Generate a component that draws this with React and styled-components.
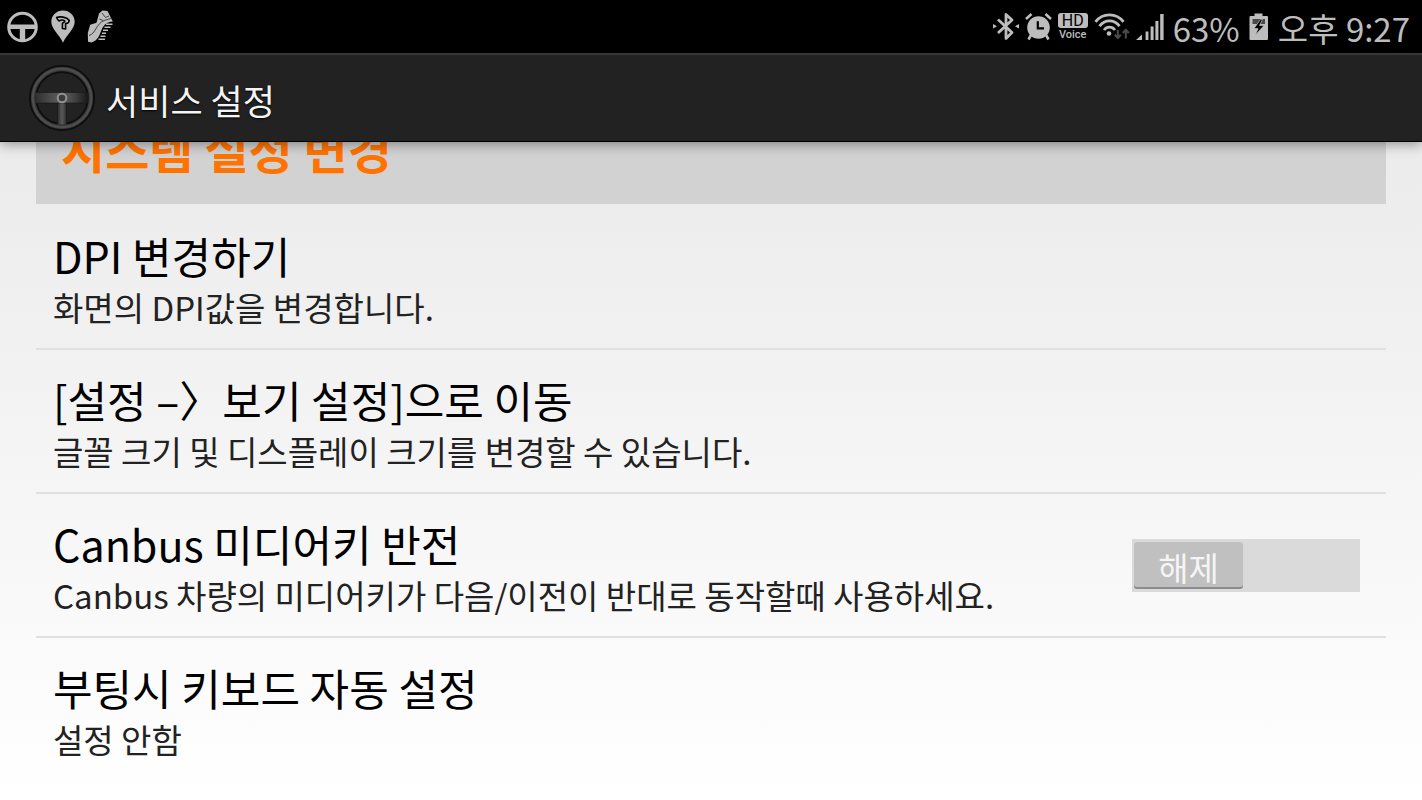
import React, { useState } from "react";
import styled, { createGlobalStyle } from "styled-components";

const settings = [
    {
        id: "dpi",
        title: "DPI 변경하기",
        summary: "화면의 DPI값을 변경합니다.",
    },
    {
        id: "display",
        title: "[설정 –〉보기 설정]으로 이동",
        summary: "글꼴 크기 및 디스플레이 크기를 변경할 수 있습니다.",
    },
    {
        id: "canbus",
        title: "Canbus 미디어키 반전",
        summary: "Canbus 차량의 미디어키가 다음/이전이 반대로 동작할때 사용하세요.",
        toggle: true,
    },
    {
        id: "keyboard",
        title: "부팅시 키보드 자동 설정",
        summary: "설정 안함",
    },
];

const WheelIcon = () => (
    <svg width="32" height="32" viewBox="0 0 32 32">
        <circle cx="15.5" cy="16" r="13.8" fill="none" stroke="#bdbdbd" strokeWidth="3" />
        <path d="M3 13.5H28V18H18.2V29H12.8V18H3Z" fill="#bdbdbd" />
    </svg>
);

const PinIcon = () => (
    <svg width="24" height="33" viewBox="0 0 24 33">
        <path d="M12 0.5C5.4 0.5 0.3 5.4 0.3 11.8C0.3 19 8 24 12 32.8C16 24 23.7 19 23.7 11.8C23.7 5.4 18.6 0.5 12 0.5Z" fill="#bdbdbd" />
        <path d="M5.6 7.4C9 6.2 15.5 7 18.2 10.2C18 13 16.6 13.6 14.6 13.5V19L11.4 18.5V13.5C11.4 12.2 14 12.6 13.8 11.2C12.2 9.7 9.7 9.9 8.3 11C7 10.2 6 9 5.6 7.4Z" fill="#bdbdbd" stroke="#000" strokeWidth="1.6" strokeLinejoin="round" />
    </svg>
);

const ShoeIcon = () => (
    <svg width="27" height="33" viewBox="0 0 27 33">
        <path d="M15.5 0.5L20.5 1L25.8 11.5C20 12 16.5 15 14.5 20C12.5 25 11 30.5 4.5 32.5L1 31.8L0.8 23L3.2 14.8L9.5 12.7L12 3.5Z" fill="#bdbdbd" />
        <path d="M2 25.5C8.5 24 9 14 17 10.5L24 8.5M15 3L18.5 7.5L22 6M12.5 9L16 10.5" fill="none" stroke="#333" strokeWidth="0.9" />
        <path d="M19 14.2H25.5M17.5 17.2H23.5M16 20.2H21M15 23.2H19M13.5 26.2H18.5M11.5 29.2H18" stroke="#bdbdbd" strokeWidth="1.5" />
    </svg>
);

const BluetoothIcon = () => (
    <svg width="26" height="29" viewBox="0 0 26 29">
        <path d="M5 7.5L19 20.5L13 26.5V2.5L19 8L5 21" fill="none" stroke="#bdbdbd" strokeWidth="2.8" strokeLinejoin="round" />
        <path d="M0 12L4 14.3L0 16.6ZM26 12L22 14.3L26 16.6Z" fill="#bdbdbd" />
    </svg>
);

const AlarmIcon = () => (
    <svg width="27" height="28" viewBox="0 0 27 28">
        <circle cx="13.5" cy="14.5" r="11.3" fill="#bdbdbd" />
        <path d="M1 6L6.5 1M26 6L20.5 1M6 22L3.5 26.5M21 22L23.5 26.5" stroke="#bdbdbd" strokeWidth="2.6" />
        <path d="M12.8 8.3V15.3H19" fill="none" stroke="#000" strokeWidth="2.2" />
    </svg>
);

const WifiIcon = () => (
    <svg width="36" height="28" viewBox="0 0 36 28">
        <path d="M1.5 8.8C8.5-0.5 22.5-0.5 29.5 8.8M5.5 13.2C10.7 6.2 20.3 6.2 25.5 13.2M10 17C13 13.2 18 13.2 21 17" fill="none" stroke="#bdbdbd" strokeWidth="2.8" />
        <circle cx="15" cy="20.5" r="2.3" fill="#bdbdbd" />
        <path d="M23.8 17V25M20.8 21.8L23.8 25L26.8 21.8M31.8 25.5V17M28.8 20L31.8 16.8L34.8 20" fill="none" stroke="#4c4c4c" strokeWidth="2" />
    </svg>
);

const SignalIcon = () => (
    <svg width="28" height="28" viewBox="0 0 28 28">
        <path d="M0 27L6 21.5V27ZM9.6 18.5H12.4V27H9.6ZM14.6 13.5H17.6V27H14.6ZM19.4 8H22.4V27H19.4ZM24.2 1H27.6V27H24.2Z" fill="#bdbdbd" />
    </svg>
);

const BatteryIcon = () => (
    <svg width="20" height="28" viewBox="0 0 20 28">
        <path d="M5.5 0.5H13.5V3H18Q19 3 19 4V26Q19 27 18 27H1.5Q0.5 27 0.5 26V4Q0.5 3 1.5 3H5.5Z" fill="#bdbdbd" />
        <path d="M3.5 6H16V11H3.5Z" fill="#4a4a4a" />
        <path d="M11.5 6.5L5 15.5H9L6.5 22L15 12.5H10.5L13.5 6.5Z" fill="#000" stroke="#bdbdbd" strokeWidth="0.7" />
    </svg>
);

const AppIcon = () => (
    <svg width="66" height="66" viewBox="0 0 66 66">
        <defs>
            <linearGradient id="spoke" x1="0" x2="1">
                <stop offset="0" stopColor="#2e2e2e" />
                <stop offset="0.25" stopColor="#484848" />
                <stop offset="0.5" stopColor="#606060" />
                <stop offset="0.75" stopColor="#404040" />
                <stop offset="1" stopColor="#141414" />
            </linearGradient>
            <linearGradient id="stem" x1="0" x2="1">
                <stop offset="0" stopColor="#2c2c2c" />
                <stop offset="0.5" stopColor="#5a5a5a" />
                <stop offset="1" stopColor="#2c2c2c" />
            </linearGradient>
        </defs>
        <circle cx="33" cy="33" r="29" fill="none" stroke="#0d0d0d" strokeWidth="8" />
        <path d="M28.5 37H37.5V60H28.5Z" fill="url(#stem)" stroke="#161616" strokeWidth="0.6" />
        <path d="M6 27.5H60V38H6Z" fill="url(#spoke)" stroke="#161616" strokeWidth="0.6" />
        <circle cx="33" cy="33" r="29" fill="none" stroke="#383838" strokeWidth="4.4" />
        <circle cx="33" cy="33" r="29.2" fill="none" stroke="#4e4e4e" strokeWidth="2.2" />
        <circle cx="33" cy="33" r="4.3" fill="#3a3a3a" stroke="#929292" strokeWidth="2" />
    </svg>
);

const App = () => {
    const [inverted, setInverted] = useState(false);

    return (
        <Screen>
            <GlobalStyle />
            <StatusBar>
                <Notifications>
                    <WheelIcon />
                    <PinIcon />
                    <ShoeIcon />
                </Notifications>
                <SystemStatus>
                    <Radios>
                        <BluetoothIcon />
                        <AlarmIcon />
                        <HdVoice>
                            <b>HD</b>
                            <span>Voice</span>
                        </HdVoice>
                        <WifiIcon />
                        <SignalIcon />
                    </Radios>
                    <StatusText>63%</StatusText>
                    <BatteryIcon />
                    <StatusText>오후 9:27</StatusText>
                </SystemStatus>
            </StatusBar>
            <ActionBar>
                <AppIcon />
                <h1>서비스 설정</h1>
            </ActionBar>
            <Content>
                <Category>
                    <h2>시스템 설정 변경</h2>
                </Category>
                <List>
                    {settings.map((item) => (
                        <li key={item.id}>
                            <Row as={item.toggle ? "label" : "button"}>
                                <Texts>
                                    <Title>{item.title}</Title>
                                    <Summary>{item.summary}</Summary>
                                </Texts>
                                {item.toggle && (
                                    <Switch $on={inverted}>
                                        <input
                                            type="checkbox"
                                            aria-label={item.title}
                                            checked={inverted}
                                            onChange={() => setInverted(!inverted)}
                                        />
                                        <Thumb>{inverted ? "설정" : "해제"}</Thumb>
                                    </Switch>
                                )}
                            </Row>
                        </li>
                    ))}
                </List>
            </Content>
        </Screen>
    );
};

const GlobalStyle = createGlobalStyle`
    * {
        box-sizing: border-box;
        margin: 0;
        padding: 0;
    }
    body {
        background: #fff;
        font-family: "Noto Sans CJK KR", "Noto Sans", sans-serif;
    }
    svg {
        display: block;
        flex-shrink: 0;
    }
`;

const Screen = styled.div`
    display: flex;
    flex-direction: column;
    min-height: 100vh;
`;

const StatusBar = styled.header`
    display: flex;
    align-items: center;
    justify-content: space-between;
    height: 53px;
    padding: 0 12px 0 7px;
    background: #000;
    color: #bdbdbd;
`;

const Notifications = styled.div`
    display: flex;
    align-items: center;
    gap: 12px;
`;

const SystemStatus = styled.div`
    display: flex;
    align-items: center;
    gap: 9px;
`;

const Radios = styled.div`
    display: flex;
    align-items: center;
    gap: 6px;
`;

const StatusText = styled.span`
    font-size: 33px;
    line-height: 48px;
    padding-top: 2px;
`;

const HdVoice = styled.div`
    display: flex;
    flex-direction: column;
    align-items: center;
    width: 30px;
    font-family: Roboto, sans-serif;
    b {
        width: 30px;
        border-radius: 3px;
        background: #bdbdbd;
        color: #000;
        font-size: 16px;
        font-weight: 400;
        line-height: 15px;
        text-align: center;
    }
    span {
        font-size: 11px;
        font-weight: 500;
        line-height: 13px;
    }
`;

const ActionBar = styled.div`
    position: relative;
    z-index: 1;
    display: flex;
    align-items: center;
    gap: 11px;
    height: 89px;
    padding: 0 29px;
    background: #222;
    border-top: 2px solid #383838;
    border-bottom: 1px solid #000;
    box-shadow: 0 2px 12px rgba(0, 0, 0, 0.4);
    h1 {
        padding-top: 4px;
        color: #f3f3f3;
        font-size: 35px;
        font-weight: 400;
        line-height: 40px;
        text-shadow: 0 1px 2px #000;
    }
`;

const Content = styled.main`
    flex: 1;
    padding: 0 36px;
    background: linear-gradient(#ebebeb, #fff);
`;

const Category = styled.div`
    display: flex;
    align-items: flex-end;
    height: 62px;
    padding: 0 26px 32px 25px;
    overflow: hidden;
    background: #d2d2d2;
    h2 {
        color: #ff7300;
        font-size: 48px;
        font-weight: 700;
        line-height: 48px;
    }
`;

const List = styled.ul`
    padding-top: 2px;
    list-style: none;
    li + li {
        border-top: 2px solid #e0e0e0;
    }
`;

const Row = styled.button`
    display: flex;
    align-items: center;
    justify-content: space-between;
    width: 100%;
    min-height: 142px;
    padding: 0 26px 0 17px;
    border: 0;
    background: none;
    font: inherit;
    text-align: left;
    cursor: pointer;
`;

const Texts = styled.span`
    display: flex;
    flex-direction: column;
    padding-top: 4px;
`;

const Title = styled.span`
    color: #000;
    font-size: 43px;
    line-height: 56px;
`;

const Summary = styled.span`
    color: #222;
    font-size: 33px;
    line-height: 48px;
`;

const Switch = styled.span`
    position: relative;
    display: flex;
    justify-content: ${({ $on }) => ($on ? "flex-end" : "flex-start")};
    flex-shrink: 0;
    width: 228px;
    height: 53px;
    padding: 3px 2px;
    background: #dadada;
    input {
        position: absolute;
        inset: 0;
        width: 100%;
        height: 100%;
        opacity: 0;
        cursor: pointer;
    }
`;

const Thumb = styled.span`
    width: 109px;
    height: 47px;
    border-radius: 3px;
    background: #c0c0c0;
    box-shadow: inset 0 -2px 0 #8c8c8c;
    color: #f5f5f5;
    font-size: 33px;
    font-weight: 400;
    line-height: 50px;
    text-align: center;
`;

export default App;
